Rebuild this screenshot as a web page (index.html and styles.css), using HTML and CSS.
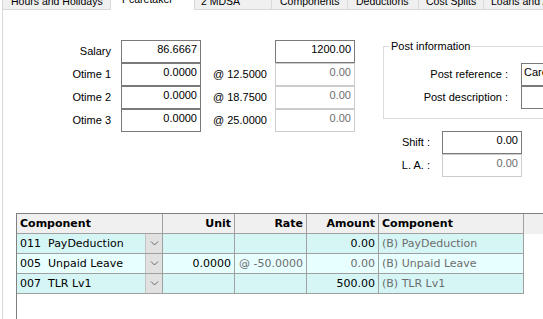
FILE: index.html
```html
<!DOCTYPE html>
<html>
<head>
<meta charset="utf-8">
<link rel="stylesheet" href="styles.css">
</head>
<body>
<div class="tabs">
  <div class="tab t1">Hours and Holidays</div>
  <div class="tab sel">Pcaretaker</div>
  <div class="tab t3">2 MDSA</div>
  <div class="tab t4">Components</div>
  <div class="tab t5">Deductions</div>
  <div class="tab t6">Cost Splits</div>
  <div class="tab t7">Loans and Advances</div>
</div>
<div class="panel">
  <div class="top">
    <div class="rates">
      <div class="lbl">Salary</div><div class="box">86.6667</div><div class="at"></div><div class="box">1200.00</div>
      <div class="lbl">Otime 1</div><div class="box">0.0000</div><div class="at">@ 12.5000</div><div class="box dis">0.00</div>
      <div class="lbl">Otime 2</div><div class="box">0.0000</div><div class="at">@ 18.7500</div><div class="box dis">0.00</div>
      <div class="lbl">Otime 3</div><div class="box">0.0000</div><div class="at">@ 25.0000</div><div class="box dis">0.00</div>
    </div>
    <div class="side">
      <div class="group">
        <div class="gtitle">Post information</div>
        <div class="pgrid">
          <div class="plbl">Post reference :</div><div class="box pbox">Caretaker</div>
          <div class="plbl">Post description :</div><div class="box pbox"></div>
        </div>
      </div>
      <div class="shift">
        <div class="slbl">Shift :</div><div class="box">0.00</div>
        <div class="slbl">L. A. :</div><div class="box dis">0.00</div>
      </div>
    </div>
  </div>
  <div class="grid">
    <div class="grow hd">
      <div class="c">Component</div>
      <div class="c r">Unit</div>
      <div class="c r">Rate</div>
      <div class="c r">Amount</div>
      <div class="c">Component</div>
      <div class="fill"></div>
    </div>
    <div class="grow odd">
      <div class="c combo"><span>011  PayDeduction</span><div class="dd"><svg width="9" height="5" viewBox="0 0 9 5"><polyline points="1,0.5 4.5,4 8,0.5" fill="none" stroke="#6a6a6a" stroke-width="1"/></svg></div></div>
      <div class="c r"></div>
      <div class="c r"></div>
      <div class="c r">0.00</div>
      <div class="c g">(B) PayDeduction</div>
    </div>
    <div class="grow even">
      <div class="c combo"><span>005  Unpaid Leave</span><div class="dd"><svg width="9" height="5" viewBox="0 0 9 5"><polyline points="1,0.5 4.5,4 8,0.5" fill="none" stroke="#6a6a6a" stroke-width="1"/></svg></div></div>
      <div class="c r">0.0000</div>
      <div class="c r g">@ -50.0000</div>
      <div class="c r g">0.00</div>
      <div class="c g">(B) Unpaid Leave</div>
    </div>
    <div class="grow odd">
      <div class="c combo"><span>007  TLR Lv1</span><div class="dd"><svg width="9" height="5" viewBox="0 0 9 5"><polyline points="1,0.5 4.5,4 8,0.5" fill="none" stroke="#6a6a6a" stroke-width="1"/></svg></div></div>
      <div class="c r"></div>
      <div class="c r"></div>
      <div class="c r">500.00</div>
      <div class="c g">(B) TLR Lv1</div>
    </div>
  </div>
</div>
</body>
</html>
```
FILE: styles.css
```css
html, body {
  margin: 0;
  background: #fff;
}
body {
  width: 543px;
  height: 319px;
  overflow: hidden;
  font-family: "Liberation Sans", Arial, sans-serif;
  font-size: 11px;
  color: #000;
}
.tabs {
  display: flex;
  align-items: flex-end;
  margin-top: -7px;
  height: 17px;
  font-size: 10.5px;
  line-height: 13px;
}
.tab {
  flex: none;
  box-sizing: border-box;
  height: 15px;
  background: #f0f0f0;
  border-right: 1px solid #d9d9d9;
  border-bottom: 1px solid #d9d9d9;
  padding-left: 8px;
  white-space: nowrap;
  overflow: hidden;
}
.t1 { width: 109px; margin-left: 2px; border-left: 1px solid #d9d9d9; }
.sel { width: 84px; height: 17px; background: #fff; border-bottom: none; padding-left: 11px; }
.t3 { width: 77px; padding-left: 6px; }
.t4 { width: 76px; }
.t5 { width: 71px; }
.t6 { width: 65px; padding-left: 7px; }
.t7 { width: 80px; padding-left: 7px; }

.panel {
  margin-left: 2px;
  border-left: 1px solid #d9d9d9;
  padding-top: 30px;
}
.top {
  display: flex;
  align-items: flex-start;
}
.rates {
  display: grid;
  grid-template-columns: 118px 80px 74px 80px;
  grid-auto-rows: 23px;
}
.lbl {
  text-align: right;
  padding-right: 10px;
  line-height: 23px;
  white-space: nowrap;
}
.box {
  box-sizing: border-box;
  height: 23px;
  border: 1px solid #7a7a7a;
  padding: 2px 3px 0;
  line-height: 13px;
  text-align: right;
  white-space: nowrap;
  overflow: hidden;
  background: #fff;
}
.dis {
  border-color: #cccccc;
  color: #6d6d6d;
}
.at {
  padding-left: 12px;
  line-height: 23px;
  white-space: pre;
}
.side {
  margin-left: 28px;
}
.group {
  width: 180px;
  margin-top: 6px;
  border: 1px solid #dcdcdc;
  padding-bottom: 9px;
}
.gtitle {
  width: max-content;
  margin: -7px 0 0 6px;
  padding: 0 1px;
  line-height: 12px;
  background: #fff;
}
.pgrid {
  display: grid;
  grid-template-columns: 124px 60px;
  column-gap: 13px;
  grid-auto-rows: 23px;
  margin-top: 11px;
}
.plbl, .slbl {
  text-align: right;
  line-height: 23px;
  white-space: nowrap;
}
.pbox {
  text-align: left;
  padding-left: 2px;
}
.shift {
  display: grid;
  grid-template-columns: 47px 80px;
  column-gap: 12px;
  grid-auto-rows: 23px;
  margin-top: 12px;
}

.grid {
  margin: 36px 0 0 13px;
  height: 140px;
  border-left: 1px solid #808080;
  border-top: 1px solid #808080;
  font-family: "DejaVu Sans", Verdana, sans-serif;
  font-size: 11px;
}
.grow {
  display: grid;
  grid-template-columns: 146px 72px 72px 72px 145px 1fr;
  height: 20px;
}
.c {
  box-sizing: border-box;
  height: 20px;
  border-right: 1px solid #a0a0a0;
  border-bottom: 1px solid #a0a0a0;
  padding: 0 3px;
  line-height: 19px;
  white-space: pre;
  overflow: hidden;
}
.r { text-align: right; }
.g { color: #6d6d6d; }
.hd .c { font-weight: bold; background: #f0f0f0; }
.hd .fill { background: #f0f0f0; }
.odd .c { background: #d6f6f6; }
.even .c { background: #e8ffff; }
.combo {
  display: flex;
  padding-right: 0;
}
.combo span {
  flex: 1;
  overflow: hidden;
}
.dd {
  flex: none;
  box-sizing: border-box;
  width: 17px;
  height: 19px;
  background: #e1e1e1;
  border-left: 1px solid #c4c4c4;
  display: flex;
  align-items: center;
  justify-content: center;
}
.dd svg { display: block; }
```
